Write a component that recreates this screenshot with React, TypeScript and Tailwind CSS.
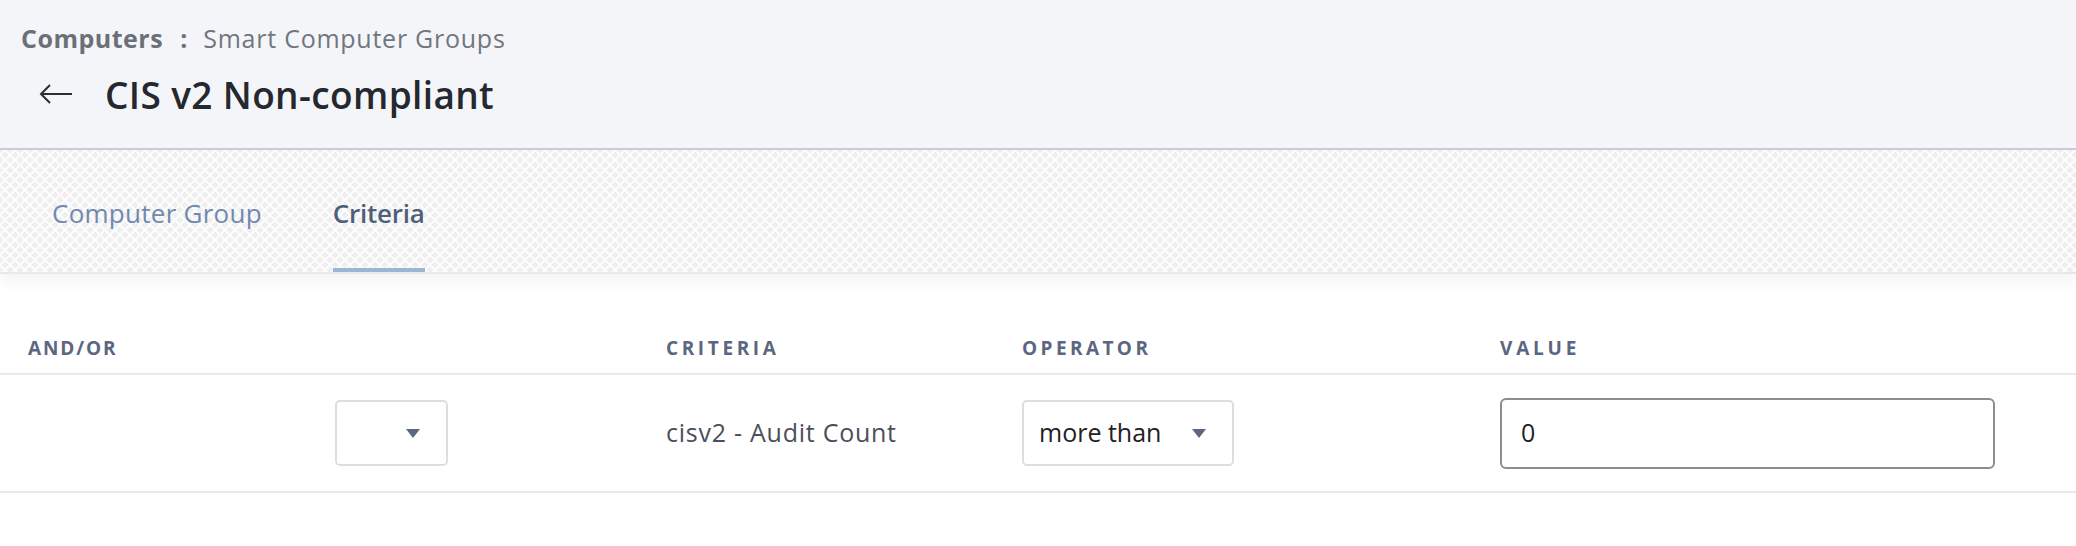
import React from "react";

function Caret() {
  return (
    <svg width="14" height="9" viewBox="0 0 14 9" className="shrink-0">
      <path d="M0 0 L14 0 L7 9 Z" fill="#5b6680" />
    </svg>
  );
}

export default function App() {
  return (
    <div className="w-[2076px] min-h-[546px] bg-white font-['Open_Sans',sans-serif]">
      {/* Header */}
      <div className="h-[150px] bg-[#f4f5f9] border-b-2 border-[#c9cdd9] pl-[21px] pt-[20px]">
        <div className="flex items-center h-[36px] text-[25px] leading-none">
          <span className="font-bold text-[#6b6f78] tracking-[0.02em]">Computers</span>
          <span className="font-bold text-[#6b6f78] ml-[17px]">:</span>
          <span className="text-[#71757e] ml-[16px] tracking-[0.03em]">Smart Computer Groups</span>
        </div>
        <div className="flex items-center h-[56px] mt-[10px]">
          <svg width="34" height="20" viewBox="0 0 34 20" className="ml-[18px]">
            <path d="M2 10 H33 M11 1 L2 10 L11 19" fill="none" stroke="#2b2e33" strokeWidth="2" />
          </svg>
          <span className="ml-[32px] text-[37px] font-semibold text-[#25282e] leading-none tracking-[0.01em]">CIS v2 Non-compliant</span>
        </div>
      </div>

      {/* Tabs */}
      <div className="relative h-[124px] border-b-2 border-[#e6e8ec] bg-[#fcfcfc] bg-[radial-gradient(#efefef_38%,transparent_40%),radial-gradient(#efefef_38%,transparent_40%)] bg-[length:10px_10px] bg-[position:0_0,5px_5px] shadow-[0_8px_14px_rgba(20,30,60,0.05)] flex items-end pl-[52px] gap-[71px]">
        <div className="h-full flex items-center pt-[4px] text-[26px] text-[#7189b0] tracking-[0.01em]">Computer Group</div>
        <div className="h-full flex flex-col">
          <div className="flex-1 flex items-center pt-[8px] text-[26px] font-semibold text-[#4f5f7a] tracking-[-0.01em]">Criteria</div>
          <div className="h-[4px] bg-[#9db5d5]" />
        </div>
      </div>

      {/* Table */}
      <div className="pl-[28px] grid grid-cols-[638px_356px_478px_1fr] items-center h-[101px] border-b-2 border-[#e7e9ee] pt-[50px] text-[19px] font-bold text-[#5b6680]">
        <div className="tracking-[0.1em]">AND/OR</div>
        <div className="tracking-[0.19em]">CRITERIA</div>
        <div className="tracking-[0.18em]">OPERATOR</div>
        <div className="tracking-[0.2em]">VALUE</div>
      </div>
      <div className="pl-[28px] grid grid-cols-[638px_356px_478px_1fr] items-center h-[118px] border-b-2 border-[#e7e9ee]">
        <div className="pl-[307px]">
          <div className="w-[113px] h-[66px] rounded-[5px] border-2 border-[#dcdee2] bg-white flex items-center justify-end pr-[26px]">
            <Caret />
          </div>
        </div>
        <div className="text-[25px] text-[#4a4f5a] tracking-[0.03em]">cisv2 - Audit Count</div>
        <div>
          <div className="w-[212px] h-[66px] rounded-[5px] border-2 border-[#dcdee2] bg-white flex items-center justify-between pl-[15px] pr-[26px] text-[25px] text-[#1f2124]">
            <span>more than</span>
            <Caret />
          </div>
        </div>
        <div>
          <div className="w-[495px] h-[71px] rounded-[6px] border-2 border-[#8a8d92] bg-white flex items-center pl-[19px] text-[25px] text-[#1f2124]">
            0
          </div>
        </div>
      </div>
    </div>
  );
}
